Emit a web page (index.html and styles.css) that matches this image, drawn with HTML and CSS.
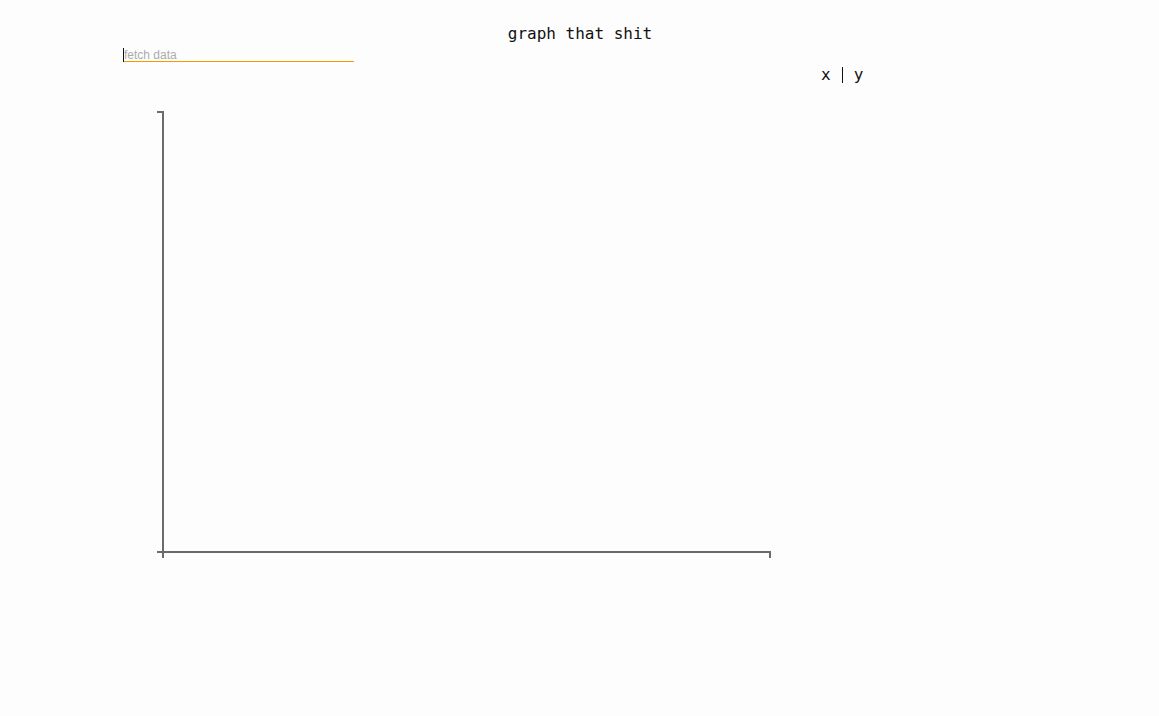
FILE: index.html
```html
<!DOCTYPE html>
<html>
<head>
<meta charset="utf-8">
<title>graph that shit</title>
<link rel="stylesheet" href="styles.css">
</head>
<body>
<div class="app">
  <h1 class="title">graph that shit</h1>
  <div class="fetch-wrap">
    <input class="fetch" type="text" placeholder="fetch data" autofocus>
  </div>
  <div class="row">
    <svg class="chart" width="640" height="500" viewBox="0 0 640 500">
      <path class="axis" d="M17,50H23V490H17"/>
      <path class="axis" d="M23,496V490H630V496"/>
    </svg>
    <div class="legend">
      <span class="lx">x</span>
      <span class="sep"></span>
      <span class="ly">y</span>
    </div>
  </div>
</div>
</body>
</html>
```
FILE: styles.css
```css
html, body {
  margin: 0;
  padding: 0;
  background: #fdfdfd;
}
body {
  font-family: "DejaVu Sans Mono", monospace;
  color: #111;
}
.app {
  width: 1159px;
  height: 716px;
}
.title {
  margin: 0;
  padding-top: 24px;
  padding-left: 1px;
  font-size: 16px;
  font-weight: normal;
  line-height: 20px;
  text-align: center;
}
.fetch-wrap {
  margin-left: 123px;
  width: 231px;
  height: 18px;
  background:
    linear-gradient(#111, #111) no-repeat 0 4px / 1px 14px,
    linear-gradient(#f09b00, #f09b00) no-repeat 0 100% / 100% 1px;
}
.fetch {
  display: block;
  box-sizing: border-box;
  margin: 0;
  width: 231px;
  height: 17px;
  padding: 5px 0 0 1px;
  border: none;
  background: transparent;
  outline: none;
  font-family: "Liberation Sans", Arial, sans-serif;
  font-size: 12px;
  color: #333;
  caret-color: #000;
}
.fetch::placeholder {
  color: #ababab;
}
.row {
  display: flex;
  align-items: flex-start;
}
.chart {
  display: block;
  margin-left: 140px;
}
.axis {
  fill: none;
  stroke: #6b6b6b;
  stroke-width: 2;
}
.legend {
  display: flex;
  align-items: flex-start;
  margin-left: 41px;
  padding-top: 3px;
  font-size: 16px;
  line-height: 19px;
}
.lx {
  padding-right: 11px;
}
.sep {
  width: 1px;
  height: 16px;
  margin-top: 2px;
  background: #111;
}
.ly {
  padding-left: 11px;
}
```
